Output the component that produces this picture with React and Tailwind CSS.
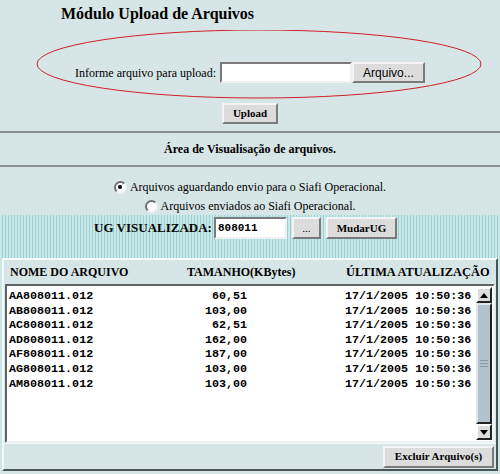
import { useState } from "react";

const files = [
  { nome: "AA808011.012", tam: "60,51", data: "17/1/2005 10:50:36" },
  { nome: "AB808011.012", tam: "103,00", data: "17/1/2005 10:50:36" },
  { nome: "AC808011.012", tam: "62,51", data: "17/1/2005 10:50:36" },
  { nome: "AD808011.012", tam: "162,00", data: "17/1/2005 10:50:36" },
  { nome: "AF808011.012", tam: "187,00", data: "17/1/2005 10:50:36" },
  { nome: "AG808011.012", tam: "103,00", data: "17/1/2005 10:50:36" },
  { nome: "AM808011.012", tam: "103,00", data: "17/1/2005 10:50:36" },
];

const serif = "font-[Liberation_Serif,serif]";
const sans = "font-[Liberation_Sans,sans-serif]";
const mono = "font-[Liberation_Mono,monospace]";

const btn =
  "bg-[#dcdcdc] border-2 border-t-[#f4f4f4] border-l-[#f4f4f4] border-b-[#7a7a7a] border-r-[#7a7a7a] text-black";

const Radio = ({ checked, onClick }) => (
  <span
    onClick={onClick}
    className="inline-flex items-center justify-center w-[13px] h-[13px] rounded-full bg-white border-2 border-t-[#6f6f6f] border-l-[#6f6f6f] border-b-[#f0f0f0] border-r-[#f0f0f0] mr-[3px]"
  >
    {checked && <span className="w-[4px] h-[4px] rounded-full bg-black" />}
  </span>
);

const App = () => {
  const [aba, setAba] = useState("aguardando");
  const [ug, setUg] = useState("808011");

  return (
    <div className={`w-[500px] h-[474px] bg-[#d6e5e5] ${serif} text-black overflow-hidden flex flex-col`}>
      <h1 className="pl-[61px] pt-[4px] h-[24px] text-[16px] font-bold leading-[20px]">Módulo Upload de Arquivos</h1>

      <div className="relative h-[80px] flex items-start justify-center pt-[38px]">
        <svg className="absolute left-0 top-[6px]" width="500" height="74">
          <ellipse cx="259" cy="34" rx="222" ry="34" fill="none" stroke="#d0202a" strokeWidth="1" />
        </svg>
        <div className="relative flex items-center">
          <span className="text-[12px] mr-[4px]">Informe arquivo para upload:</span>
          <input
            className="w-[132px] h-[21px] bg-white border-2 border-t-[#7a7a7a] border-l-[#7a7a7a] border-b-[#f0f0f0] border-r-[#f0f0f0] outline-none"
          />
          <button className={`${btn} w-[73px] h-[21px] text-[12px] ${sans}`}>Arquivo...</button>
        </div>
      </div>

      <div className="flex justify-center mt-[-1px]">
        <button className={`${btn} ${serif} w-[56px] h-[21px] text-[11px] font-bold`}>Upload</button>
      </div>

      <div className="mt-[7px] border-t-2 border-[#8a8f8f]" />
      <p className="text-center text-[12px] font-bold h-[32px] leading-[32px]">Área de Visualisação de arquivos.</p>
      <div className="border-t-2 border-[#8a8f8f]" />

      <div className="flex flex-col items-center text-[12px] pt-[10px]">
        <label className="flex items-center h-[20px]">
          <Radio checked={aba === "aguardando"} onClick={() => setAba("aguardando")} />
          Arquivos aguardando envio para o Siafi Operacional.
        </label>
        <label className="flex items-center h-[18px]">
          <Radio checked={aba === "enviados"} onClick={() => setAba("enviados")} />
          Arquivos enviados ao Siafi Operacional.
        </label>
      </div>

      <div className="flex-1 flex flex-col bg-[repeating-linear-gradient(90deg,#c9e9e9_0px,#c9e9e9_2px,#9ccfcf_2px,#9ccfcf_3px)]">
        <div className="flex items-center justify-center h-[22px] mt-[2px] ml-[-9px]">
          <span className="text-[13px] font-bold mr-[2px]">UG VISUALIZADA:</span>
          <input
            value={ug}
            onChange={(e) => setUg(e.target.value)}
            className={`w-[73px] h-[22px] bg-white px-[2px] text-[11px] font-bold ${mono} border-2 border-t-[#7a7a7a] border-l-[#7a7a7a] border-b-[#f0f0f0] border-r-[#f0f0f0] outline-none`}
          />
          <button className={`${btn} ${serif} w-[29px] h-[22px] text-[11px] ml-[5px]`}>...</button>
          <button className={`${btn} ${serif} w-[71px] h-[22px] text-[11px] font-bold ml-[5px]`}>MudarUG</button>
        </div>

        <div className="mt-[19px] mx-[2px] flex flex-col bg-[#d6e5e5] border-2 border-t-[#f4f8f8] border-l-[#f4f8f8] border-b-[#4b5555] border-r-[#4b5555] h-[213px]">
          <div className="flex items-center h-[24px] font-bold px-[6px] whitespace-nowrap">
            <span className="w-[177px] shrink-0 text-[12px]">NOME DO ARQUIVO</span>
            <span className="w-[159px] shrink-0 text-[12px]">TAMANHO(KBytes)</span>
            <span className="shrink-0 text-[12.4px]">ÚLTIMA ATUALIZAÇÃO</span>
          </div>
          <div className="mx-[1px] flex h-[159px] bg-white border-2 border-t-[#5d6565] border-l-[#5d6565] border-b-[#eef4f4] border-r-[#eef4f4]">
            <div className={`flex-1 pt-[3px] pl-[2px] ${mono} font-bold text-[11.7px] leading-[14.6px] whitespace-nowrap`}>
              {files.map((f) => (
                <div key={f.nome} className="flex">
                  <span className="w-[120px]">{f.nome}</span>
                  <span className="w-[118px] text-right">{f.tam}</span>
                  <span className="ml-[98px]">{f.data}</span>
                </div>
              ))}
            </div>
            <div className="w-[16px] my-[1px] mr-[1px] flex flex-col bg-[#a7b9c2]">
              <div className="h-[16px] bg-[#dcdcdc] border-2 border-t-white border-l-white border-b-[#222] border-r-[#222] flex items-center justify-center">
                <span className="w-0 h-0 border-l-[4px] border-r-[4px] border-b-[5px] border-l-transparent border-r-transparent border-b-black" />
              </div>
              <div className="flex-1 bg-[#b2c2cb] border-2 border-t-[#dde6ea] border-l-[#dde6ea] border-b-[#222] border-r-[#222] flex flex-col items-center justify-center gap-[2px]">
                <span className="w-[8px] h-px bg-[#8a9aa3]" />
                <span className="w-[8px] h-px bg-[#8a9aa3]" />
                <span className="w-[8px] h-px bg-[#8a9aa3]" />
              </div>
              <div className="h-[16px] bg-[#dcdcdc] border-2 border-t-white border-l-white border-b-[#222] border-r-[#222] flex items-center justify-center">
                <span className="w-0 h-0 border-l-[4px] border-r-[4px] border-t-[5px] border-l-transparent border-r-transparent border-t-black" />
              </div>
            </div>
          </div>
          <div className="flex-1 flex items-center justify-end pr-[2px] border-t border-[#f4f8f8]">
            <button className={`${btn} ${serif} w-[111px] h-[22px] text-[11px] font-bold`}>Excluir Arquivo(s)</button>
          </div>
        </div>
        <div className="h-[3px] bg-[#d6e5e5]" />
      </div>
    </div>
  );
};

export default App;
